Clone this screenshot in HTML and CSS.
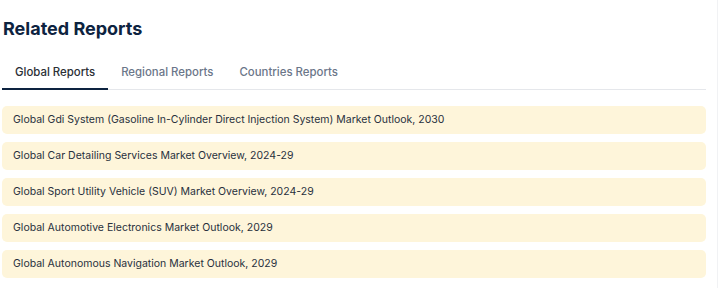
FILE: index.html
```html
<!DOCTYPE html>
<html lang="en">
<head>
    <meta charset="UTF-8">
    <meta name="viewport" content="width=device-width, initial-scale=1.0">
    <title>Related Reports</title>
    <link rel="stylesheet" href="styles.css">
</head>
<body>
    <div class="related-reports">
        <h2>Related Reports</h2>

        <div class="tabs">
            <a href="#" class="tab active">Global Reports</a>
            <a href="#" class="tab">Regional Reports</a>
            <a href="#" class="tab">Countries Reports</a>
        </div>

        <ul class="report-list">
            <li><a href="#">Global Gdi System (Gasoline In-Cylinder Direct Injection System) Market Outlook, 2030</a></li>
            <li><a href="#">Global Car Detailing Services Market Overview, 2024-29</a></li>
            <li><a href="#">Global Sport Utility Vehicle (SUV) Market Overview, 2024-29</a></li>
            <li><a href="#">Global Automotive Electronics Market Outlook, 2029</a></li>
            <li><a href="#">Global Autonomous Navigation Market Outlook, 2029</a></li>
        </ul>
    </div>
</body>
</html>
```

FILE: styles.css
```css
* {
    margin: 0;
    padding: 0;
    box-sizing: border-box;
}

body {
    font-family: Inter, 'Noto Sans', sans-serif;
    background: #ffffff;
    min-height: 100vh;
    border-right: 1px solid #f1f2f4;
}

.related-reports {
    width: 704px;
    margin-left: 2px;
    padding-top: 17px;
}

h2 {
    color: #0d2340;
    font-size: 18px;
    font-weight: 700;
    line-height: 24px;
    margin-left: 1px;
    margin-bottom: 23px;
}

.tabs {
    display: flex;
    border-bottom: 1px solid #e5e7eb;
    margin-bottom: 16px;
}

.tab {
    padding: 0 13px 8px;
    font-size: 11.4px;
    font-weight: 500;
    line-height: 16px;
    color: #6b7689;
    text-decoration: none;
    border-bottom: 2px solid transparent;
    margin-bottom: -1px;
}

.tab.active {
    color: #2b2f36;
    border-bottom-color: #0d2340;
}

.report-list {
    list-style: none;
    display: flex;
    flex-direction: column;
    gap: 8px;
}

.report-list li {
    background: #fef5da;
    border-radius: 5px;
}

.report-list a {
    display: block;
    padding: 6px 11px;
    font-size: 10.5px;
    line-height: 16px;
    color: #28303d;
    text-decoration: none;
}
```
